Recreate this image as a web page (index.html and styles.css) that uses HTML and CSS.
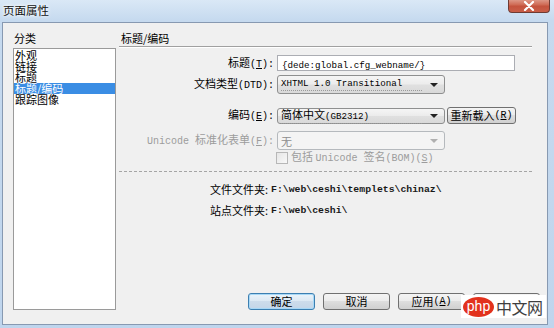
FILE: index.html
```html
<!DOCTYPE html>
<html lang="zh">
<head>
<meta charset="utf-8">
<link rel="stylesheet" href="styles.css">
</head>
<body>
<div class="win">
  <div class="titlebar">
    <span class="title">页面属性</span>
    <span class="close"><svg width="12" height="10" viewBox="0 0 12 10"><path d="M2 1 L10 9 M10 1 L2 9" stroke="#fff" stroke-width="2.2" stroke-linecap="round"/></svg></span>
  </div>
  <div class="client">
    <div class="left">
      <div class="cat">分类</div>
      <ul class="list">
        <li>外观</li>
        <li>链接</li>
        <li>标题</li>
        <li class="sel">标题/编码</li>
        <li>跟踪图像</li>
      </ul>
    </div>
    <div class="right">
      <div class="head">标题/编码</div>
      <div class="row r1">
        <span class="lbl">标题<span class="lat">(<u>T</u>):</span></span>
        <div class="input"><span class="mono">{dede:global.cfg_webname/}</span></div>
      </div>
      <div class="row r2">
        <span class="lbl">文档类型<span class="lat">(DTD):</span></span>
        <div class="select tall"><span class="mono focus">XHTML 1.0 Transitional</span><span class="arrow"></span></div>
      </div>
      <div class="row r3">
        <span class="lbl">编码<span class="lat">(<u>E</u>):</span></span>
        <div class="select"><span class="focus">简体中文<span class="mono">(GB2312)</span></span><span class="arrow"></span></div>
        <div class="btn reload">重新载入<span class="lat">(<u>R</u>)</span></div>
      </div>
      <div class="row r4 dis">
        <span class="lbl"><span class="lat">Unicode </span>标准化表单<span class="lat">(<u>F</u>):</span></span>
        <div class="select tall disabled"><span>无</span><span class="arrow"></span></div>
      </div>
      <div class="row r5 dis">
        <span class="check"></span>
        <span class="chk-text">包括 <span class="lat">Unicode </span>签名<span class="lat">(BOM)(<u>S</u>)</span></span>
      </div>
      <div class="sep"></div>
      <div class="frow f1"><span class="flbl">文件文件夹:</span><span class="path">F:\web\ceshi\templets\chinaz\</span></div>
      <div class="frow f2"><span class="flbl">站点文件夹:</span><span class="path">F:\web\ceshi\</span></div>
      <div class="buttons">
        <div class="btn def">确定</div>
        <div class="btn">取消</div>
        <div class="btn">应用<span class="lat">(<u>A</u>)</span></div>
        <div class="btn">帮助</div>
      </div>
    </div>
  </div>
</div>
<div class="wm"><span class="php">php</span><span class="cn">中文网</span></div>
</body>
</html>
```

FILE: styles.css
```css
* { box-sizing: border-box; }
html, body { margin: 0; padding: 0; }
body {
  width: 554px;
  height: 328px;
  overflow: hidden;
  position: relative;
  background: #c3d8ee;
  font-family: "Noto Sans CJK SC", sans-serif;
  font-size: 11px;
  color: #000;
}
.win {
  display: flex;
  flex-direction: column;
  height: 328px;
  background: linear-gradient(180deg, #dae8f6 0, #c6daef 20px, #bfd5ed 100%);
}
.titlebar {
  height: 22px;
  flex: none;
  display: flex;
  justify-content: space-between;
  align-items: flex-start;
  padding: 0 4px 0 3px;
}
.title {
  font-size: 11.5px;
  line-height: 14px;
  margin-top: 3px;
  color: #111;
  text-shadow: 0 0 5px #fff, 0 0 3px #fff;
}
.close {
  width: 42px;
  height: 14px;
  margin-top: -1px;
  background: linear-gradient(180deg, #e0a090 0, #cf6a54 45%, #c4533d 55%, #c95e48 100%);
  border: 1px solid #6e3b33;
  border-top: none;
  border-radius: 0 0 4px 4px;
  display: flex;
  align-items: center;
  justify-content: center;
}
.client {
  flex: 1;
  margin: 0 6px 3px 2px;
  border: 1px solid #8799b1;
  background: #f0f0f0;
  display: flex;
}
.left {
  margin-left: 10px;
  width: 103px;
  display: flex;
  flex-direction: column;
}
.cat {
  height: 25px;
  padding: 9px 0 0 1px;
  line-height: 13px;
}
.list {
  height: 262px;
  margin: 0;
  padding: 1px 0 0 0;
  list-style: none;
  background: #fff;
  border: 1px solid #9a9a9a;
}
.list li {
  height: 11px;
  line-height: 11px;
  padding-left: 1px;
  white-space: nowrap;
}
.list li.sel {
  background: #3a8de4;
  color: #fff;
}
.right {
  margin-left: 3px;
  flex: 1;
  display: flex;
  flex-direction: column;
}
.head {
  width: 413px;
  height: 24px;
  padding: 9px 0 0 2px;
  line-height: 13px;
  border-bottom: 1px solid #a0a0a0;
  box-shadow: 0 1px 0 #fff;
}
.row {
  display: flex;
  align-items: center;
}
.lbl {
  width: 155px;
  margin-right: 3px;
  text-align: right;
  white-space: nowrap;
  line-height: 13px;
}
.lat {
  font-family: "Liberation Mono", monospace;
  font-size: 10px;
}
.mono {
  font-family: "Liberation Mono", monospace;
  font-size: 9.2px;
}
.r1 { margin-top: 8px; height: 16px; }
.r2 { margin-top: 4px; height: 19px; }
.r3 { margin-top: 13px; height: 17px; }
.r4 { margin-top: 7px; height: 19px; }
.r5 { margin-top: 1px; height: 13px; }
.input {
  width: 238px;
  height: 16px;
  border: 1px solid #abadb3;
  background: #fff;
  padding-left: 4px;
  line-height: 14px;
}
.select {
  width: 168px;
  height: 16px;
  display: flex;
  align-items: center;
  border: 1px solid #8e8f8f;
  border-radius: 3px;
  background: linear-gradient(180deg, #f5f5f5 0, #ececec 48%, #e0e0e0 52%, #d9d9d9 100%);
  padding: 0 6px 0 3px;
  line-height: 12px;
  white-space: nowrap;
}
.select.tall { height: 19px; }
.select > span:first-child { flex: 1; }
.focus {
  white-space: nowrap;
  border-bottom: 1px dotted #9a9a9a;
  margin-right: 8px;
}
.arrow {
  flex: none;
  width: 0;
  height: 0;
  border-left: 4px solid transparent;
  border-right: 4px solid transparent;
  border-top: 4px solid #222;
}
.select.disabled {
  background: #f4f4f4;
  border-color: #b5b9bd;
  color: #8d8d8d;
}
.select.disabled .arrow { border-top-color: #b0b0b0; }
.dis .lbl, .dis .chk-text { color: #9c9c9c; }
.btn {
  height: 17px;
  border: 1px solid #707070;
  border-radius: 3px;
  background: linear-gradient(180deg, #f4f4f4 0, #ececec 45%, #dedede 50%, #d0d0d0 100%);
  display: flex;
  align-items: center;
  justify-content: center;
  line-height: 13px;
  white-space: nowrap;
}
.reload {
  width: 69px;
  margin-left: 2px;
}
.check {
  width: 12px;
  height: 12px;
  margin-left: 157px;
  border: 1px solid #b7b7b7;
  background: linear-gradient(135deg, #e6e6e6, #f8f8f8);
}
.chk-text {
  margin-left: 3px;
  line-height: 13px;
  white-space: nowrap;
}
.sep {
  width: 413px;
  margin-top: 7px;
  border-top: 1px dashed #a5a5a5;
}
.frow {
  display: flex;
  line-height: 13px;
  padding-left: 91px;
}
.f1 { margin-top: 11px; }
.f2 { margin-top: 8px; }
.flbl { margin-right: 3px; }
.path {
  font-family: "Liberation Mono", monospace;
  font-size: 9.8px;
  font-weight: bold;
  color: #1a1a1a;
}
.buttons {
  margin-top: auto;
  margin-bottom: 14px;
  margin-right: 7px;
  display: flex;
  justify-content: flex-end;
  gap: 8px;
}
.buttons .btn { width: 67px; }
.btn.def {
  border-color: #3c7fb1;
  box-shadow: inset 0 0 0 1px #a8d8f6;
  background: linear-gradient(180deg, #eaf4fb 0, #dde9f3 45%, #cddceb 50%, #c4d6e8 100%);
}
.wm {
  position: absolute;
  left: 461px;
  top: 295px;
  width: 85px;
  height: 23px;
  background: #fff;
  display: flex;
  align-items: center;
  gap: 2px;
  padding-left: 2px;
}
.php {
  width: 31px;
  height: 20px;
  border-radius: 50%;
  background: #e2321d;
  color: #fff;
  font-family: "Liberation Sans", sans-serif;
  font-size: 14px;
  line-height: 18px;
  text-align: center;
}
.cn {
  font-size: 16px;
  line-height: 20px;
  color: #3f3f3f;
  letter-spacing: -0.5px;
}
```
